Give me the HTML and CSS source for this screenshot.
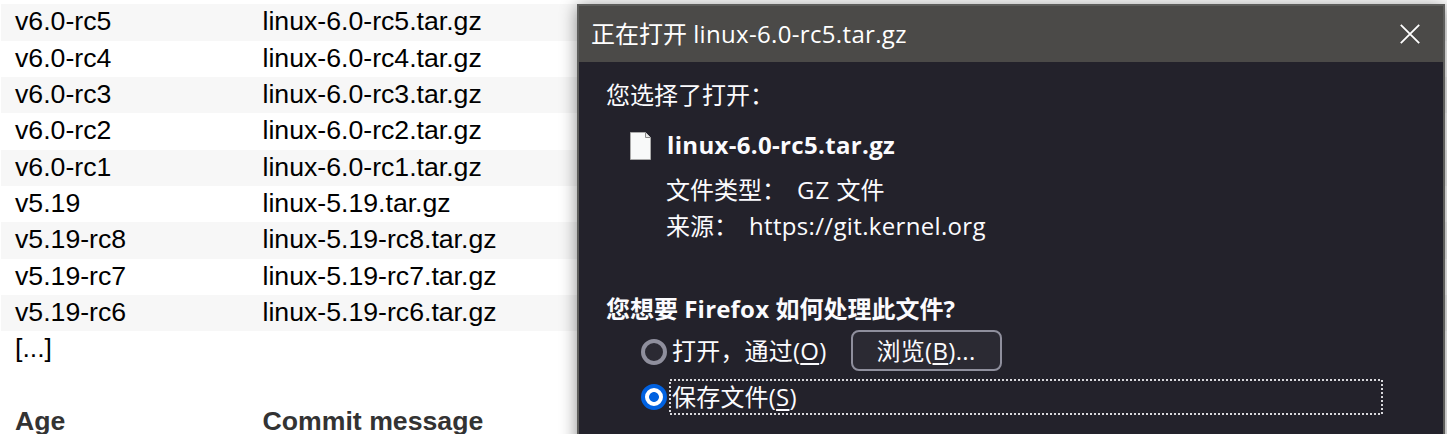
FILE: index.html
```html
<!DOCTYPE html>
<html lang="zh-CN">
<head>
<meta charset="utf-8">
<title>linux-6.0-rc5.tar.gz</title>
<link rel="stylesheet" href="styles.css">
</head>
<body>
<main class="tags">
  <div class="row"><span>v6.0-rc5</span><span>linux-6.0-rc5.tar.gz</span></div>
  <div class="row"><span>v6.0-rc4</span><span>linux-6.0-rc4.tar.gz</span></div>
  <div class="row"><span>v6.0-rc3</span><span>linux-6.0-rc3.tar.gz</span></div>
  <div class="row"><span>v6.0-rc2</span><span>linux-6.0-rc2.tar.gz</span></div>
  <div class="row"><span>v6.0-rc1</span><span>linux-6.0-rc1.tar.gz</span></div>
  <div class="row"><span>v5.19</span><span>linux-5.19.tar.gz</span></div>
  <div class="row"><span>v5.19-rc8</span><span>linux-5.19-rc8.tar.gz</span></div>
  <div class="row"><span>v5.19-rc7</span><span>linux-5.19-rc7.tar.gz</span></div>
  <div class="row"><span>v5.19-rc6</span><span>linux-5.19-rc6.tar.gz</span></div>
  <div class="row"><span>[...]</span></div>
  <div class="row gap"></div>
  <div class="row head"><span>Age</span><span>Commit message</span></div>
</main>
<section class="dialog">
  <header class="titlebar">
    <span class="title">正在打开 <span class="lat">linux-6.0-rc5.tar.gz</span></span>
    <svg class="close" width="20" height="20" viewBox="0 0 20 20"><path d="M.8.8 19.2 19.2M19.2.8.8 19.2" fill="none" stroke="#fff" stroke-width="1.8"/></svg>
  </header>
  <div class="content">
    <p class="line">您选择了打开：</p>
    <div class="file">
      <svg class="doc" width="21" height="28" viewBox="0 0 21 28"><path d="M.5.5H15.500L20.500 5.500V27.500H.5Z" fill="#f8f9f9" stroke="#aaa"/><path d="M15.500.5V5.500H20.500" fill="#e8e8e8" stroke="#888"/></svg>
      <b class="name lat">linux-6.0-rc5.tar.gz</b>
    </div>
    <p class="line meta"><span class="label type">文件类型：</span><span><span class="gz">GZ</span> 文件</span></p>
    <p class="line meta"><span class="label origin">来源：</span><span class="url lat">https://git.kernel.org</span></p>
    <p class="line question">您想要 <span class="fx">Firefox</span> 如何处理此文件<span class="q">?</span></p>
    <div class="option open">
      <i class="radio"></i>
      <span class="caption">打开，通过(<u>O</u>)</span>
      <button class="browse">浏览(<u>B</u>)...</button>
    </div>
    <div class="option save">
      <i class="radio on"></i>
      <span class="focus">保存文件(<u>S</u>)
        <svg class="dots" width="714" height="36"><rect x="1" y="1" width="712" height="34" fill="none" stroke="#d8d8dc" stroke-width="2" stroke-dasharray="2 2"/></svg>
      </span>
    </div>
  </div>
</section>
</body>
</html>
```
FILE: styles.css
```css
* { box-sizing: border-box; }
body {
  margin: 0;
  height: 434px;
  overflow: hidden;
  background: #fff;
  position: relative;
}
.tags {
  padding: 4.200px 0 0 1px;
  font: 26.660px/34.600px "Liberation Sans", Arial, sans-serif;
  color: #000;
}
.row {
  display: grid;
  grid-template-columns: 247.500px 1fr;
  height: 36.360px;
  padding-left: 14px;
  white-space: nowrap;
}
.row:nth-child(odd) { background: #f7f7f7; }
.row.gap { background: none; }
.row.head { font-weight: bold; color: #333; }
.dialog {
  position: absolute;
  left: 577px;
  top: 4px;
  width: 868px;
  height: 450px;
  border: 2px solid #5d5d5b;
  background: #23222b;
  color: #fbfbfe;
  box-shadow: 0 2px 16px rgba(0, 0, 0, .45);
  font: 24px/36px "Open Sans", "Noto Sans CJK SC", sans-serif;
  white-space: nowrap;
}
.titlebar {
  display: flex;
  align-items: center;
  justify-content: space-between;
  height: 56px;
  padding: 0 23px 0 12px;
  background: #4b4a48;
  color: #fff;
}
.title { margin-top: -1px; }
.lat { letter-spacing: .33px; }
.gz { letter-spacing: 1px; }
.fx { letter-spacing: .2px; }
.close { display: block; }
.content { padding: 15px 0 0 27px; }
.line { margin: 0; height: 36px; }
.file {
  display: flex;
  align-items: center;
  gap: 16px;
  height: 36px;
  margin: 15px 0 8px 24px;
}
.name { margin-top: -2px; }
.meta { display: flex; padding-left: 60px; }
.label { margin-right: 1px; }
.type { width: 130px; }
.origin { width: 82px; }
.question { margin-top: 47px; font-weight: bold; }
.option { display: flex; align-items: center; padding-left: 35px; }
.open { height: 41px; margin-top: 3px; }
.save { height: 36px; margin-top: 8px; }
.radio {
  width: 26px;
  height: 26px;
  border: 4px solid #8f8f9d;
  border-radius: 50%;
  background: #2b2a33;
}
.radio.on {
  border-color: #0061e0;
  background: radial-gradient(circle, #0061e0 4.500px, #fff 5.300px);
}
.open .radio { margin-top: 2px; }
.caption { width: 179px; margin-left: 5px; letter-spacing: .2px; }
u { text-underline-offset: 3px; text-decoration-thickness: 2px; text-decoration-skip-ink: none; }
.browse {
  width: 151px;
  height: 41px;
  padding: 0 1px 0 0;
  border: 2px solid #8f8f9d;
  border-radius: 8px;
  background: #2b2a33;
  color: inherit;
  font: inherit;
  letter-spacing: .3px;
}
.focus {
  position: relative;
  width: 714px;
  height: 36px;
  margin-left: 2px;
  padding-left: 3px;
  line-height: 35px;
  letter-spacing: .2px;
}
.dots { position: absolute; left: 0; top: 0; }
```
